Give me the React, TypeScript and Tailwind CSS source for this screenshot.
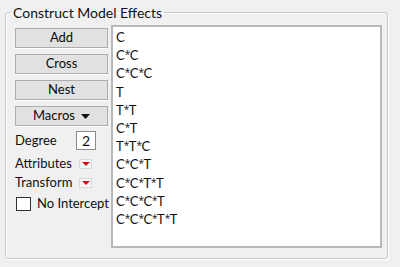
import React from "react";

const items = [
  "C",
  "C*C",
  "C*C*C",
  "T",
  "T*T",
  "C*T",
  "T*T*C",
  "C*C*T",
  "C*C*T*T",
  "C*C*C*T",
  "C*C*C*T*T",
];

function Term({ t }: { t: string }) {
  const parts = t.split("*");
  return (
    <>
      {parts.map((p, i) => (
        <React.Fragment key={i}>
          {i > 0 && (
            <span className="inline-block w-[5px] text-[10px] text-center font-['Open_Sans'] align-top leading-[17px]">
              *
            </span>
          )}
          {p}
        </React.Fragment>
      ))}
    </>
  );
}

function Btn({ children }: { children: React.ReactNode }) {
  return (
    <div className="h-[20px] w-[93px] border border-[#adadad] bg-[#e1e1e1] flex items-center justify-center text-[13px] text-[#0a0a0a] shadow-[0_1px_0_#ffffff]">
      {children}
    </div>
  );
}

function RedDrop() {
  return (
    <div className="w-[13px] h-[10px] shrink-0 border border-[#d8d8d8] bg-[#f7f7f7] flex items-center justify-center">
      <svg width="8" height="4" viewBox="0 0 8 4">
        <polygon points="0,0 8,0 4,4" fill="#d01010" />
      </svg>
    </div>
  );
}

export default function App() {
  return (
    <div
      className="w-[400px] h-[267px] bg-[#f0f0f0] pt-[4px] pl-[5px] overflow-hidden"
      style={{ fontFamily: 'Lato, "Open Sans", sans-serif' }}
    >
      <fieldset className="w-[383px] h-[255px] border border-[#c8c8c8] rounded-[3px] shadow-[inset_1px_1px_0_#ffffff,1px_1px_0_#ffffff] pl-[9px] pr-[5px]">
        <legend className="-ml-[4px] px-[2px] text-[14px] leading-[17px] text-[#111111]">
          Construct Model Effects
        </legend>
        <div className="flex mt-[4px] gap-[3px]">
          <div className="w-[93px] shrink-0 flex flex-col pt-[3px] text-[13px] text-[#111111]">
            <div className="flex flex-col gap-[6px]">
              <Btn>Add</Btn>
              <Btn>Cross</Btn>
              <Btn>Nest</Btn>
              <Btn>
                <span className="flex items-center gap-[6px]">
                  Macros
                  <svg width="9" height="5" viewBox="0 0 9 5">
                    <polygon points="0,0 9,0 4.5,5" fill="#111111" />
                  </svg>
                </span>
              </Btn>
            </div>
            <div className="flex items-center mt-[5px] h-[19px]">
              <span className="w-[61px]">Degree</span>
              <div className="w-[20px] h-[19px] shrink-0 border border-[#8a8a8a] bg-white flex items-center justify-center text-[14px]">
                2
              </div>
            </div>
            <div className="flex items-center h-[19px] mt-[4px]">
              <span className="w-[64px]">Attributes</span>
              <RedDrop />
            </div>
            <div className="flex items-center h-[19px]">
              <span className="w-[64px]">Transform</span>
              <RedDrop />
            </div>
            <div className="flex items-center mt-[2px] ml-[1px] gap-[6px]">
              <div className="w-[15px] h-[14px] shrink-0 border border-[#333333] bg-white" />
              <span className="whitespace-nowrap">No Intercept</span>
            </div>
          </div>
          <div className="w-[271px] h-[223px] shrink-0 border-2 border-[#b8b8b8] bg-white pl-[3px] pt-[1px] text-[13px] text-[#111111]">
            {items.map((t) => (
              <div key={t} className="h-[18.2px] leading-[18.2px]">
                <Term t={t} />
              </div>
            ))}
          </div>
        </div>
      </fieldset>
    </div>
  );
}
